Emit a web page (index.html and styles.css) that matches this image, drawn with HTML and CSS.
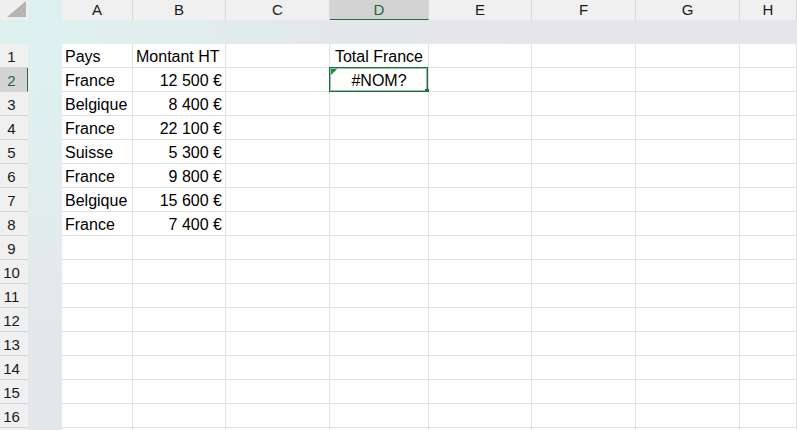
FILE: index.html
```html
<!DOCTYPE html>
<html lang="fr">
<head>
<meta charset="utf-8">
<title>Feuille</title>
<link rel="stylesheet" href="styles.css">
</head>
<body>
<div class="sheet">
  <div class="hdr">
    <div class="corner"><svg width="28" height="20" viewBox="0 0 28 20"><polygon points="7,17 26,17 26,1" fill="#b4b4b4"/></svg></div>
    <div class="gap"></div>
    <div class="ch">A</div><div class="ch">B</div><div class="ch">C</div><div class="ch sel">D</div><div class="ch">E</div><div class="ch">F</div><div class="ch">G</div><div class="ch">H</div>
  </div>

  <div class="row"><div class="rh">1</div><div class="gap"></div><div class="c">Pays</div><div class="c">Montant HT</div><div class="c"></div><div class="c ctr">Total France</div><div class="c"></div><div class="c"></div><div class="c"></div><div class="c"></div></div>
  <div class="row"><div class="rh sel">2</div><div class="gap"></div><div class="c">France</div><div class="c num">12 500 €</div><div class="c"></div><div class="c ctr active"><span class="err"></span><span class="selbox"></span>#NOM?</div><div class="c"></div><div class="c"></div><div class="c"></div><div class="c"></div></div>
  <div class="row"><div class="rh">3</div><div class="gap"></div><div class="c">Belgique</div><div class="c num">8 400 €</div><div class="c"></div><div class="c"></div><div class="c"></div><div class="c"></div><div class="c"></div><div class="c"></div></div>
  <div class="row"><div class="rh">4</div><div class="gap"></div><div class="c">France</div><div class="c num">22 100 €</div><div class="c"></div><div class="c"></div><div class="c"></div><div class="c"></div><div class="c"></div><div class="c"></div></div>
  <div class="row"><div class="rh">5</div><div class="gap"></div><div class="c">Suisse</div><div class="c num">5 300 €</div><div class="c"></div><div class="c"></div><div class="c"></div><div class="c"></div><div class="c"></div><div class="c"></div></div>
  <div class="row"><div class="rh">6</div><div class="gap"></div><div class="c">France</div><div class="c num">9 800 €</div><div class="c"></div><div class="c"></div><div class="c"></div><div class="c"></div><div class="c"></div><div class="c"></div></div>
  <div class="row"><div class="rh">7</div><div class="gap"></div><div class="c">Belgique</div><div class="c num">15 600 €</div><div class="c"></div><div class="c"></div><div class="c"></div><div class="c"></div><div class="c"></div><div class="c"></div></div>
  <div class="row"><div class="rh">8</div><div class="gap"></div><div class="c">France</div><div class="c num">7 400 €</div><div class="c"></div><div class="c"></div><div class="c"></div><div class="c"></div><div class="c"></div><div class="c"></div></div>
  <div class="row"><div class="rh">9</div><div class="gap"></div><div class="c"></div><div class="c"></div><div class="c"></div><div class="c"></div><div class="c"></div><div class="c"></div><div class="c"></div><div class="c"></div></div>
  <div class="row"><div class="rh">10</div><div class="gap"></div><div class="c"></div><div class="c"></div><div class="c"></div><div class="c"></div><div class="c"></div><div class="c"></div><div class="c"></div><div class="c"></div></div>
  <div class="row"><div class="rh">11</div><div class="gap"></div><div class="c"></div><div class="c"></div><div class="c"></div><div class="c"></div><div class="c"></div><div class="c"></div><div class="c"></div><div class="c"></div></div>
  <div class="row"><div class="rh">12</div><div class="gap"></div><div class="c"></div><div class="c"></div><div class="c"></div><div class="c"></div><div class="c"></div><div class="c"></div><div class="c"></div><div class="c"></div></div>
  <div class="row"><div class="rh">13</div><div class="gap"></div><div class="c"></div><div class="c"></div><div class="c"></div><div class="c"></div><div class="c"></div><div class="c"></div><div class="c"></div><div class="c"></div></div>
  <div class="row"><div class="rh">14</div><div class="gap"></div><div class="c"></div><div class="c"></div><div class="c"></div><div class="c"></div><div class="c"></div><div class="c"></div><div class="c"></div><div class="c"></div></div>
  <div class="row"><div class="rh">15</div><div class="gap"></div><div class="c"></div><div class="c"></div><div class="c"></div><div class="c"></div><div class="c"></div><div class="c"></div><div class="c"></div><div class="c"></div></div>
  <div class="row"><div class="rh">16</div><div class="gap"></div><div class="c"></div><div class="c"></div><div class="c"></div><div class="c"></div><div class="c"></div><div class="c"></div><div class="c"></div><div class="c"></div></div>
  <div class="row"><div class="rh"></div><div class="gap"></div><div class="c"></div><div class="c"></div><div class="c"></div><div class="c"></div><div class="c"></div><div class="c"></div><div class="c"></div><div class="c"></div></div>
</div>
</body>
</html>
```

FILE: styles.css
```css
html, body {
  margin: 0;
  padding: 0;
}
body {
  width: 797px;
  height: 430px;
  overflow: hidden;
  background: radial-gradient(circle at 0 0, #dcf2f0 0, #e0eeee 160px, #e4e8eb 330px, #e5e6ea 520px);
  font-family: "Liberation Sans", Arial, sans-serif;
  color: #000;
}
.sheet {
  display: flex;
  flex-direction: column;
  height: 430px;
  overflow: hidden;
}
.hdr, .row {
  display: grid;
  grid-template-columns: 28px 34px 71px 93px 104px 99px 103px 104px 104px 57px;
  flex: none;
}
.hdr {
  height: 20px;
  margin-bottom: 24px;
}
.corner {
  background: #efefef;
  height: 20px;
}
.corner svg {
  display: block;
}
.ch {
  box-sizing: border-box;
  background: #f0f0f0;
  border-right: 1px solid #d9d9d9;
  text-align: center;
  font-size: 15px;
  line-height: 20px;
  color: #1a1a1a;
}
.ch.sel {
  background: #d3d3d3;
  color: #1c6b3e;
  border-bottom: 1px solid #1e7145;
  line-height: 19px;
}
.row {
  height: 24px;
}
.rh {
  box-sizing: border-box;
  background: #f0f0f0;
  border-bottom: 1px solid #d6d6d6;
  font-size: 15px;
  line-height: 23px;
  padding: 1px 5px 0 0;
  text-align: center;
  color: #1a1a1a;
  overflow: hidden;
}
.rh.sel {
  background: #d3d3d3;
  color: #1c6b3e;
  border-right: 1px solid #1e7145;
  padding-right: 4px;
}
.c {
  box-sizing: border-box;
  position: relative;
  background: #fff;
  border-right: 1px solid #e1e1e1;
  border-bottom: 1px solid #e1e1e1;
  font-size: 16px;
  line-height: 21px;
  padding: 2px 3px 0 3px;
  white-space: nowrap;
}
.c.num {
  text-align: right;
}
.c.ctr {
  text-align: center;
}
.selbox {
  position: absolute;
  top: -1px;
  left: -1px;
  right: 0;
  bottom: -1px;
  border: 1px solid #1d6b3f;
  box-shadow: inset 0 0 0 1px #9cc2a8;
}
.selbox::after {
  content: "";
  position: absolute;
  right: -2px;
  bottom: -2px;
  width: 4px;
  height: 4px;
  background: #1e7145;
}
.err {
  position: absolute;
  top: 1px;
  left: 1px;
  width: 0;
  height: 0;
  border-top: 6px solid #1a8a45;
  border-right: 6px solid transparent;
  z-index: 1;
}
```
